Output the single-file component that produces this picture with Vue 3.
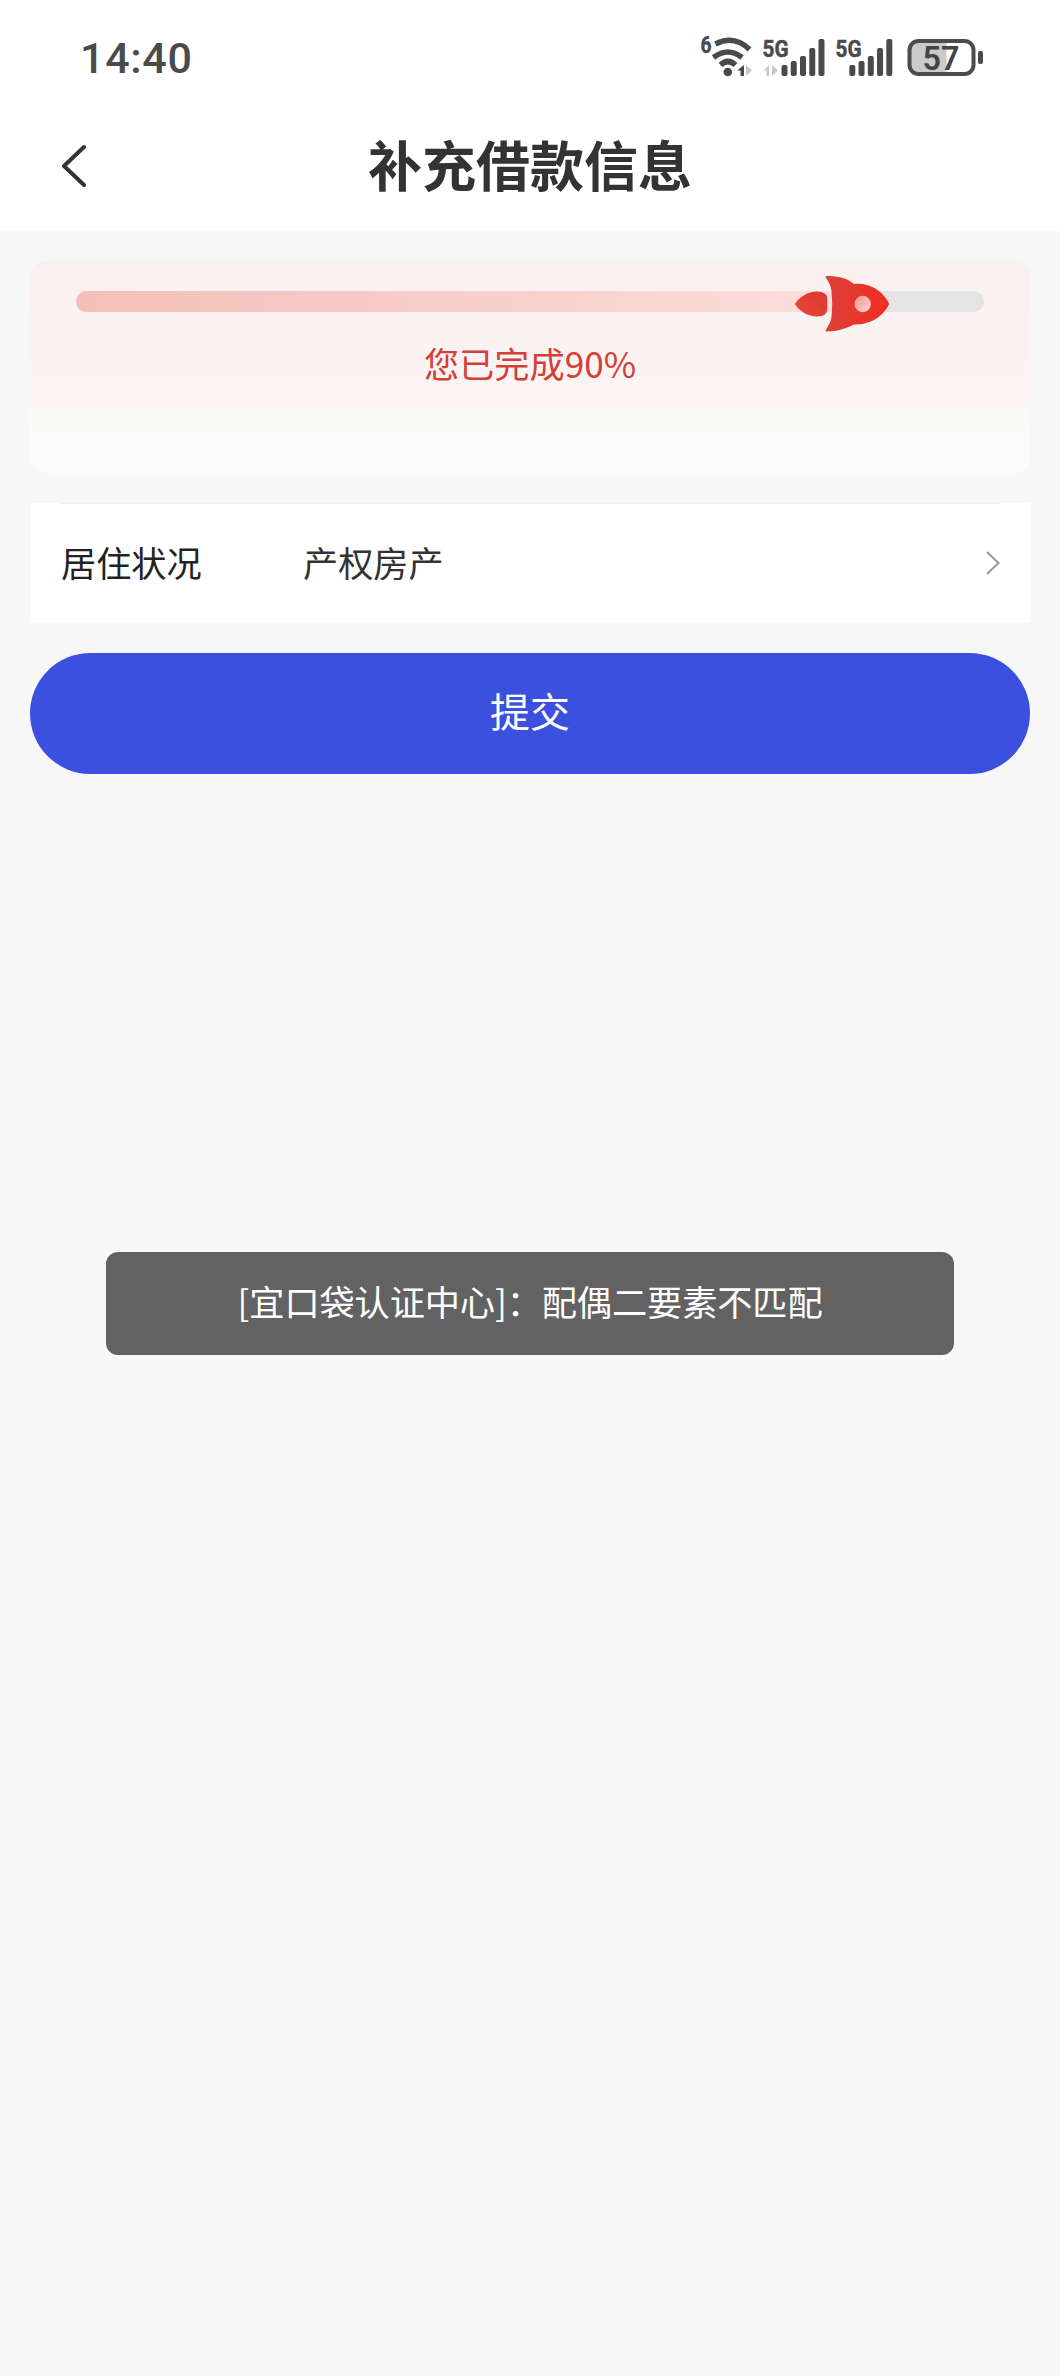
<template>
  <div class="page">
    <header class="header">
      <div class="status-bar">
        <span class="time">{{ time }}</span>
        <svg class="status-icons" viewBox="690 25 310 65" width="310" height="65">
          <!-- wifi -->
          <text class="tag" x="700.5" y="53" textLength="11" lengthAdjust="spacingAndGlyphs">6</text>
          <g class="wifi">
            <path d="M715.500 44 Q734 34.500 749.500 49.500" />
            <path d="M713.500 57.500 Q728 46.500 742 57.500" />
            <path d="M720.500 65 Q728 58 735.500 65" />
          </g>
          <circle class="dark" cx="727.8" cy="72" r="4.3" />
          <path class="dark" d="M744 65v11h-3.500v-5.500h-3.500z" />
          <path class="light" d="M746 65v11l6-5.500z" />
          <path class="light" d="M769 65v11h-2.500v-5.500h-3z" />
          <path class="light" d="M772 65v11l6-5.500z" />
          <!-- mobile signal, one per SIM -->
          <g v-for="sim in sims" :key="sim.x">
            <text class="tag" :x="sim.x" y="57" textLength="26" lengthAdjust="spacingAndGlyphs">{{ sim.label }}</text>
            <rect
              v-for="(top, i) in barTops"
              :key="i"
              class="dark"
              :x="sim.bars + i * 9.25"
              :y="top"
              width="6"
              :height="76 - top"
              rx="2"
            />
          </g>
          <!-- battery -->
          <path class="charge" d="M946.500 41H919q-9.500 0-9.500 9.500V64q0 9.500 9.500 9.500h27.500z" />
          <rect class="battery" x="909.5" y="41" width="64" height="33" rx="9" />
          <rect class="dark" x="978" y="51" width="5" height="13" rx="2" />
          <text class="percent" x="922.5" y="69.5" textLength="37" lengthAdjust="spacingAndGlyphs">{{ battery }}</text>
        </svg>
      </div>
      <div class="nav-bar">
        <button class="btn-back" type="button" aria-label="返回">
          <svg viewBox="0 0 26 44" width="26" height="44">
            <path d="M24 3 L4 22 L24 41" />
          </svg>
        </button>
        <h1>补充借款信息</h1>
      </div>
    </header>

    <main class="content">
      <section class="progress-card">
        <div class="track">
          <div class="track-fill" :style="{ width: progress + '%' }"></div>
          <svg class="rocket" viewBox="0 0 96 58" width="96" height="58">
            <defs>
              <linearGradient id="flame" x1="0" y1="1" x2="1" y2="0">
                <stop offset="0" stop-color="#f0453a" />
                <stop offset="1" stop-color="#d63a32" />
              </linearGradient>
              <linearGradient id="body" x1="0" y1="0" x2="1" y2="0">
                <stop offset="0" stop-color="#dc4038" />
                <stop offset="0.550" stop-color="#e8362c" />
                <stop offset="1" stop-color="#f02d22" />
              </linearGradient>
              <linearGradient id="glass" x1="0" y1="0" x2="1" y2="1">
                <stop offset="0" stop-color="#f0968c" />
                <stop offset="1" stop-color="#fbd8d4" />
              </linearGradient>
            </defs>
            <path
              class="flame"
              d="M1 29 C5 22 14 16.500 23 16.500 Q33.300 16.500 33.300 24 V34 Q33.300 41.500 23 41.500 C14 41.500 5 36 1 29z"
            />
            <path
              class="body"
              d="M33 1 C44 1 53 3 60 9 C76 7.500 89 16 95.300 29 C89 42 76 50 60 49.500 C53 53 44 56.500 33 56.500 Q30.800 56.500 32 54.500 C35 50 37 46 37.500 42 Q39 29 37.500 16 C37 12 35 7 32 3 Q30.800 1 33 1z"
            />
            <circle class="glass" cx="68.7" cy="29" r="8.2" />
          </svg>
        </div>
        <p>您已完成90%</p>
      </section>

      <section class="cell">
        <span class="cell-label">居住状况</span>
        <span class="cell-value">产权房产</span>
        <svg class="arrow" viewBox="0 0 14 24" width="14" height="24">
          <path d="M1 1 L12.500 12 L1 23" />
        </svg>
      </section>

      <button class="btn-submit" type="button">提交</button>
    </main>

    <div class="toast">[宜口袋认证中心]：配偶二要素不匹配</div>
  </div>
</template>

<script setup>
import { ref } from 'vue'

const time = ref('14:40')
const battery = ref(57)
const progress = ref(86)

const barTops = [65, 61, 56, 48, 39]
const sims = [
  { label: '5G', x: 762.5, bars: 781.5 },
  { label: '5G', x: 835.5, bars: 849.3 }
]
</script>

<style>
body {
  background: #f7f7f7;
}
</style>

<style scoped>
.page {
  position: relative;
  width: 1060px;
  height: 2376px;
  overflow: hidden;
  background: #f7f7f7;
  font-family: 'Noto Sans CJK SC', sans-serif;
}

.header {
  height: 231px;
  background: #fff;
}

.status-bar {
  display: flex;
  justify-content: space-between;
  height: 90px;
  padding: 25px 60px 0 80px;
  box-sizing: border-box;
}

.time {
  font-family: Roboto, sans-serif;
  font-size: 43px;
  font-weight: 500;
  line-height: 67px;
  letter-spacing: 0.7px;
  color: #4a4a4a;
}

.tag {
  font-family: Roboto, sans-serif;
  font-size: 24px;
  font-weight: 700;
  fill: #4a4a4a;
  stroke: #4a4a4a;
  stroke-width: 0.5;
}

.percent {
  font-family: Roboto, sans-serif;
  font-size: 34px;
  font-weight: 600;
  fill: #444;
}

.wifi path {
  fill: none;
  stroke: #4a4a4a;
  stroke-width: 5.5;
}

.dark {
  fill: #4a4a4a;
}

.light {
  fill: #c8c8c8;
}

.charge {
  fill: #cbcbcb;
}

.battery {
  fill: none;
  stroke: #4c4c4c;
  stroke-width: 4;
}

.nav-bar {
  display: grid;
  grid-template-columns: 100px 1fr 100px;
  align-items: center;
  height: 152px;
}

.btn-back {
  display: flex;
  padding: 0 0 0 60px;
  border: none;
  background: none;
}

.btn-back path {
  fill: none;
  stroke: #333;
  stroke-width: 4;
  stroke-linecap: round;
  stroke-linejoin: round;
}

h1 {
  margin: 0;
  padding-bottom: 5px;
  text-align: center;
  color: #333;
  font-size: 54px;
  font-weight: 700;
  line-height: 80px;
}

.content {
  display: flex;
  flex-direction: column;
  gap: 30px;
  padding: 30px 30px 0;
}

.progress-card {
  height: 212px;
  padding: 30px 46px 0;
  box-sizing: border-box;
  border-radius: 16px;
  background: linear-gradient(
    #faf0ee 0,
    #fcf1f0 20px,
    #fbf2f2 60px,
    #fbf5f4 144px,
    #f9f9f7 148px,
    #f9f9f8 169px,
    #fcfcfb 172px,
    #fcfbfb 100%
  );
}

.track {
  position: relative;
  height: 21px;
  border-radius: 11px;
  background: #e4e4e4;
}

.track-fill {
  height: 100%;
  border-radius: 11px 0 0 11px;
  background: linear-gradient(90deg, #f4bfb8, #fbdfdb);
}

.rocket {
  position: absolute;
  top: -16px;
  left: 718px;
}

.flame {
  fill: url(#flame);
}

.body {
  fill: url(#body);
}

.glass {
  fill: url(#glass);
}

.progress-card p {
  margin: 25px 0 0;
  text-align: center;
  color: #d43f38;
  font-size: 35.200px;
  line-height: 52px;
}

.cell {
  position: relative;
  display: flex;
  align-items: center;
  height: 120px;
  padding: 0 30px 0 31px;
  box-sizing: border-box;
  background: #fff;
  font-size: 35.200px;
}

/* hairline over the top edge */
.cell::before {
  content: '';
  position: absolute;
  top: 0;
  left: 30px;
  right: 30px;
  height: 1px;
  background: #f1f1f1;
}

.cell-label,
.cell-value {
  padding-bottom: 4px;
}

.cell-label {
  width: 242px;
  color: #222;
}

.cell-value {
  flex: 1;
  color: #333;
}

.arrow path {
  fill: none;
  stroke: #999;
  stroke-width: 2;
}

.btn-submit {
  height: 121px;
  padding: 0 0 7px;
  border: none;
  border-radius: 61px;
  background: #3c50e0;
  color: #fff;
  font-family: inherit;
  font-size: 40px;
}

.toast {
  position: absolute;
  top: 1252px;
  left: 106px;
  width: 848px;
  height: 103px;
  border-radius: 12px;
  background: #626262;
  color: #fff;
  font-size: 35.200px;
  line-height: 98px;
  letter-spacing: -0.1px;
  text-align: center;
}
</style>
